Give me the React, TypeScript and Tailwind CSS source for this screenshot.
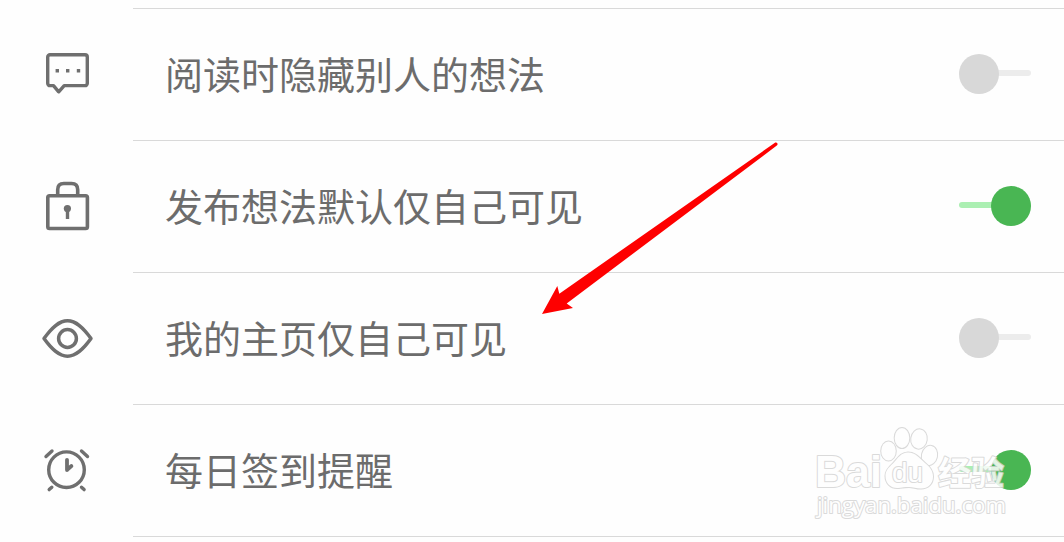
import type { ReactNode } from "react";
import { useState } from "react";
import clsx from "clsx";

type SettingRowProps = {
  icon: ReactNode;
  label: string;
  defaultOn?: boolean;
};

function CommentIcon() {
  return (
    <svg className="mt-[31px] h-[70px] w-20" viewBox="0 0 80 70" fill="none" stroke="#6f6f6f" strokeWidth="3.4">
      <path
        d="M19.5 14.7h35.5a2.3 2.3 0 0 1 2.3 2.3v26.3a2.3 2.3 0 0 1-2.3 2.3H34.2L28.7 51.8L23.5 45.6H20a2.3 2.3 0 0 1-2.3-2.3V17a2.3 2.3 0 0 1 2.3-2.3z"
        strokeLinejoin="round"
      />
      <path d="M25.6 30.8h3.4M36 30.8h3.4M46.8 30.8h3.4" />
    </svg>
  );
}

function LockIcon() {
  return (
    <svg className="mt-[29px] h-[70px] w-20" viewBox="0 0 80 70" fill="none" stroke="#6f6f6f" strokeWidth="3.6">
      <rect x="17.8" y="25.8" width="39.6" height="32.7" rx="1.8" />
      <path d="M27.7 25.5v-5.8q0-6.2 6.2-6.2h7.6q6.2 0 6.2 6.2v5.8" />
      <circle cx="37.4" cy="38.6" r="3.6" fill="#6f6f6f" stroke="none" />
      <path d="M37.5 39v10" strokeWidth="3.4" />
    </svg>
  );
}

function EyeIcon() {
  return (
    <svg className="mt-8 h-[70px] w-20" viewBox="0 0 80 70" fill="none" stroke="#6f6f6f" strokeWidth="3.5">
      <path
        d="M14 33.5C22 22.5 29 15.8 37.5 15.8S53 22.5 61 33.5C53 44.5 46 51.2 37.5 51.2S22 44.5 14 33.5z"
        strokeLinejoin="round"
      />
      <circle cx="37.5" cy="33.5" r="8.9" />
    </svg>
  );
}

function AlarmIcon() {
  return (
    <svg className="mt-[30px] h-[70px] w-20" viewBox="0 0 80 70" fill="none" stroke="#6f6f6f" strokeWidth="3.4">
      <circle cx="36.5" cy="34.7" r="17.8" />
      <g strokeLinecap="round">
        <path d="M16 21.5l6-5.5M51.5 16l6 5.5M19.2 54.6l2.6-2.4M51.5 52.2l2.6 2.4" />
        <path d="M37 24.8v10.2M37.4 34.6l4-3.6" strokeWidth="3.8" />
      </g>
    </svg>
  );
}

function Toggle({ label, defaultOn = false }: { label: string; defaultOn?: boolean }) {
  const [on, setOn] = useState(defaultOn);

  return (
    <button
      aria-checked={on}
      aria-label={label}
      className="mb-0.5 grid h-10 w-[72px] items-center"
      onClick={() => setOn((current) => !current)}
      role="switch"
      type="button"
    >
      <span
        className={clsx(
          "col-start-1 row-start-1 mb-0.5 h-1.5 rounded-sm",
          on ? "bg-[#abefb2]" : "bg-[#ececec]",
        )}
      />
      <span
        className={clsx(
          "col-start-1 row-start-1 size-10 rounded-full",
          on ? "justify-self-end bg-[#49b653]" : "bg-[#d8d8d8]",
        )}
      />
    </button>
  );
}

function SettingRow({ icon, label, defaultOn }: SettingRowProps) {
  return (
    <li className="flex h-[132px]">
      <div className="w-[133px] shrink-0 pl-[30px]">{icon}</div>
      <div className="flex flex-1 items-center justify-between border-b border-[#d9d9d9] pr-[33px] pl-8">
        <span className="mb-[3px] text-[38px] leading-[56px] whitespace-nowrap text-[#6c6c6c]">{label}</span>
        <Toggle defaultOn={defaultOn} label={label} />
      </div>
    </li>
  );
}

function PointerArrow() {
  return (
    <svg className="pointer-events-none absolute top-[130px] left-[530px] h-[195px] w-[260px]" viewBox="0 0 260 195">
      <path
        d="M12 184L27.3 156L29.3 163.7L245.3 12.5Q247.4 12 247.6 14Q247.6 15.2 246.5 15.8L36.7 173.5L43 178z"
        fill="#fe0000"
      />
    </svg>
  );
}

function Watermark() {
  return (
    <svg
      className="pointer-events-none absolute top-[415px] left-[800px] h-[127px] w-[264px] opacity-85"
      viewBox="0 0 264 127"
      fill="#fefefe"
      stroke="#d4d4d4"
      strokeWidth="2"
      strokeLinejoin="round"
      paintOrder="stroke"
    >
      <text x="15" y="72" fontFamily="'Liberation Sans', sans-serif" fontSize="44" fontWeight="700" textLength="67" lengthAdjust="spacingAndGlyphs">
        Bai
      </text>
      <ellipse cx="88.5" cy="36" rx="7.3" ry="9.5" />
      <ellipse cx="102" cy="23" rx="7.3" ry="10" />
      <ellipse cx="119" cy="24" rx="7.8" ry="9.7" transform="rotate(8 119 24)" />
      <ellipse cx="129.5" cy="40.5" rx="7.6" ry="9.7" transform="rotate(12 129.5 40.5)" />
      <path d="M108 37.5C101 37.5 98 43 93 48.5C88 53 85.5 56 85.5 61C85.5 68.5 91 73.5 98 73C102 72.5 105 72 109 72C113 72 116 73.5 121 73.5C128 73.5 133 69 133 61.5C133 56 130 52 125 48C119 43 116 37.5 108 37.5z" />
      <text x="92" y="67" fontFamily="'Liberation Sans', sans-serif" fontSize="27" textLength="31" lengthAdjust="spacingAndGlyphs">
        du
      </text>
      <text x="138" y="69.5" fontFamily="'Noto Sans CJK SC', sans-serif" fontSize="33" fontWeight="700">
        经验
      </text>
      <text x="17" y="98" fontFamily="'Open Sans', sans-serif" fontSize="22" textLength="189" lengthAdjust="spacingAndGlyphs">
        jingyan.baidu.com
      </text>
    </svg>
  );
}

export default function App() {
  return (
    <main className="relative h-[542px] w-[1064px] overflow-hidden bg-[#fefefe] font-['Noto_Sans_CJK_SC',sans-serif]">
      <div className="ml-[133px] h-[9px] border-b border-[#d9d9d9]" />
      <ul>
        <SettingRow icon={<CommentIcon />} label="阅读时隐藏别人的想法" />
        <SettingRow defaultOn icon={<LockIcon />} label="发布想法默认仅自己可见" />
        <SettingRow icon={<EyeIcon />} label="我的主页仅自己可见" />
        <SettingRow defaultOn icon={<AlarmIcon />} label="每日签到提醒" />
      </ul>
      <PointerArrow />
      <Watermark />
    </main>
  );
}
